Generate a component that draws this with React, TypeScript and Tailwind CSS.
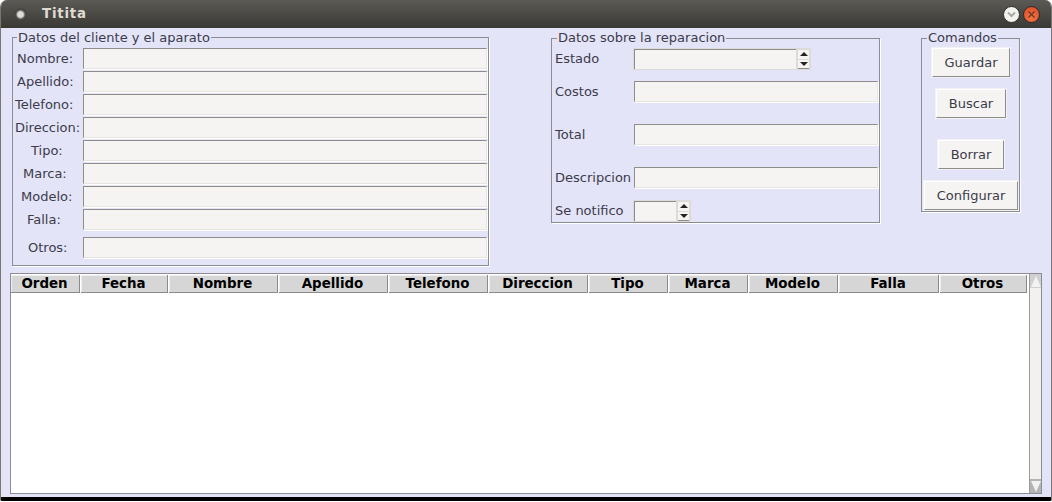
const font = { fontFamily: '"DejaVu Sans", sans-serif' };

const clientRows = [
  { label: "Nombre:", pad: "pl-[4px]" },
  { label: "Apellido:", pad: "pl-[4px]" },
  { label: "Telefono:", pad: "pl-[2px]" },
  { label: "Direccion:", pad: "pl-[2px]" },
  { label: "Tipo:", pad: "pl-[18px]" },
  { label: "Marca:", pad: "pl-[10px]" },
  { label: "Modelo:", pad: "pl-[8px]" },
  { label: "Falla:", pad: "pl-[14px]" },
];

const columns = [
  { name: "Orden", width: "w-[70px]" },
  { name: "Fecha", width: "w-[88px]" },
  { name: "Nombre", width: "w-[110px]" },
  { name: "Apellido", width: "w-[110px]" },
  { name: "Telefono", width: "w-[100px]" },
  { name: "Direccion", width: "w-[100px]" },
  { name: "Tipo", width: "w-[80px]" },
  { name: "Marca", width: "w-[80px]" },
  { name: "Modelo", width: "w-[90px]" },
  { name: "Falla", width: "w-[101px]" },
  { name: "Otros", width: "w-[88px]" },
];

function Field({ className }: { className: string }) {
  return (
    <div className={`h-[21px] bg-[#f5f4f2] border border-[#8f8d8a] border-r-[#e6e5e2] border-b-[#e6e5e2] shadow-[1px_1px_0_#ffffff] ${className}`} />
  );
}

function Spinner({ className }: { className: string }) {
  return (
    <div className={`h-[22px] -ml-px flex bg-[#dcdbd8] p-px ${className}`}>
      <div className="flex-1 bg-[#f5f4f2] border-l border-t border-[#8f8d8a]" />
      <div className="w-[11px] ml-[2px] mr-px flex flex-col justify-center gap-px">
        <div className="h-[9px] bg-[#f5f4f2] flex items-center justify-center">
          <div className="w-0 h-0 border-x-[4px] border-x-transparent border-b-[4px] border-b-[#222222]" />
        </div>
        <div className="h-[9px] bg-[#f5f4f2] border-b border-[#8f8d8a] flex items-center justify-center">
          <div className="w-0 h-0 border-x-[4px] border-x-transparent border-t-[4px] border-t-[#222222]" />
        </div>
      </div>
    </div>
  );
}

function Group({ title, className, legendClass, children }: { title: string; className: string; legendClass: string; children: React.ReactNode }) {
  return (
    <fieldset className={`border border-[#8c8c94] shadow-[1px_1px_0_#ffffff] min-w-0 ${className}`}>
      <legend className={`px-px text-[13px] leading-[15px] text-[#3c3b4a] h-[15px] ${legendClass}`}>{title}</legend>
      {children}
    </fieldset>
  );
}

function CmdButton({ label, className }: { label: string; className: string }) {
  return (
    <button className={`block h-[29px] bg-[#f5f4f2] border border-[#ffffff] border-r-[#8f8d8a] border-b-[#8f8d8a] shadow-[0_0_0_1px_#f2f1f5] text-[13px] text-[#3c3b4a] ${className}`}>
      {label}
    </button>
  );
}

function MidRow({ label, rowClass, children }: { label: string; rowClass: string; children: React.ReactNode }) {
  return (
    <div className={`flex items-start h-[22px] ${rowClass}`}>
      <span className="w-[82px] pl-[3px] self-center whitespace-nowrap text-[13px] text-[#3c3b4a]">{label}</span>
      {children}
    </div>
  );
}

export default function App() {
  return (
    <div className="w-[1052px] h-[502px] bg-white overflow-hidden" style={font}>
      <div className="h-[501px] flex flex-col rounded-t-[7px] rounded-b-[2px] overflow-hidden border-x border-[#7b7671] border-b-[4px] border-b-black bg-[#e4e4f8]">
        <div className="h-[28px] shrink-0 flex items-center bg-gradient-to-b from-[#5c5a55] to-[#3a3935] pl-[13px] pr-[11px]">
          <div className="w-[13px] h-[13px] rounded-full bg-[radial-gradient(circle,#dedcd6_30%,#55534f_50%,#2f2e2b_85%)]" />
          <span className="ml-[15px] text-[13.33px] font-bold text-[#dfdbd2] tracking-[0.8px]">Titita</span>
          <div className="ml-auto flex items-center gap-[3px]">
            <div className="w-[17px] h-[17px] rounded-full bg-[#f2f2ef] border border-[#2d2c29] flex items-center justify-center">
              <svg width="11" height="7" viewBox="0 0 11 7">
                <path d="M2 1.5 L5.5 5 L9 1.5" fill="none" stroke="#a9a8a4" strokeWidth="2" />
              </svg>
            </div>
            <div className="w-[17px] h-[17px] rounded-full bg-[radial-gradient(circle_at_50%_70%,#f6733f,#d94a28)] border border-[#2d2c29] flex items-center justify-center">
              <svg width="9" height="9" viewBox="0 0 9 9">
                <path d="M1.5 1.5 L7.5 7.5 M7.5 1.5 L1.5 7.5" fill="none" stroke="#6a3a28" strokeWidth="1.4" />
              </svg>
            </div>
          </div>
        </div>

        <div className="flex-1 min-h-0 pl-[9px] pt-[2px]">
          <div className="flex items-start h-[243px]">
            <Group title="Datos del cliente y el aparato" legendClass="ml-[4px]" className="w-[477px] h-[236px] ml-[2px]">
              <div className="pt-[3px] flex flex-col gap-[2px]">
                {clientRows.map((r) => (
                  <div key={r.label} className="flex items-center h-[21px]">
                    <span className={`w-[70px] whitespace-nowrap text-[13px] text-[#3c3b4a] ${r.pad}`}>{r.label}</span>
                    <Field className="w-[404px]" />
                  </div>
                ))}
                <div className="flex items-center h-[21px] mt-[5px]">
                  <span className="w-[70px] pl-[15px] text-[13px] text-[#3c3b4a]">Otros:</span>
                  <Field className="w-[404px]" />
                </div>
              </div>
            </Group>

            <Group title="Datos sobre la reparacion" legendClass="ml-[5px] -translate-y-px" className="w-[329px] h-[192px] ml-[62px] mt-px">
              <div className="pt-[2px]">
                <MidRow label="Estado" rowClass="">
                  <Spinner className="w-[178px]" />
                </MidRow>
                <MidRow label="Costos" rowClass="mt-[11px]">
                  <Field className="w-[244px]" />
                </MidRow>
                <MidRow label="Total" rowClass="mt-[21px]">
                  <Field className="w-[244px]" />
                </MidRow>
                <MidRow label="Descripcion" rowClass="mt-[21px]">
                  <Field className="w-[244px]" />
                </MidRow>
                <MidRow label="Se notifico" rowClass="mt-[11px]">
                  <Spinner className="w-[58px]" />
                </MidRow>
              </div>
            </Group>

            <Group title="Comandos" legendClass="ml-[5px] -translate-y-px" className="w-[99px] h-[181px] ml-[41px] mt-px">
              <div className="pt-[2px] flex flex-col items-center">
                <CmdButton label="Guardar" className="w-[78px] ml-px" />
                <CmdButton label="Buscar" className="w-[70px] ml-px mt-[12px]" />
                <CmdButton label="Borrar" className="w-[66px] ml-px mt-[22px]" />
                <CmdButton label="Configurar" className="w-[94px] pl-px mt-[12px]" />
              </div>
            </Group>
          </div>

          <div className="w-[1032px] h-[221px] flex bg-white border border-[#8c8c94]">
            <div className="w-[1018px] shrink-0 flex flex-col pt-px">
              <div className="flex h-[18px] shrink-0">
                {columns.map((c) => (
                  <div key={c.name} className={`${c.width} shrink-0 flex items-center justify-center pr-[2px] bg-[#d6d6d6] border-r border-r-white shadow-[inset_-1px_-1px_0_#8a8a8a,inset_1px_1px_0_#f0f0f0] text-[13.4px] font-bold text-black`}>
                    {c.name}
                  </div>
                ))}
              </div>
            </div>
            <div className="w-[12px] shrink-0 flex flex-col bg-[#f2f1ef] border-l border-[#9a9a9a]">
              <div className="h-[14px] bg-[#d0d0d0] flex items-center justify-center">
                <div className="w-0 h-0 border-x-[5px] border-x-transparent border-b-[11px] border-b-[#f2f2f2]" />
              </div>
              <div className="flex-1" />
              <div className="h-[14px] bg-[#b4b4b4] flex items-center justify-center">
                <div className="w-0 h-0 border-x-[5px] border-x-transparent border-t-[11px] border-t-[#f2f2f2]" />
              </div>
            </div>
          </div>
        </div>
      </div>
    </div>
  );
}
